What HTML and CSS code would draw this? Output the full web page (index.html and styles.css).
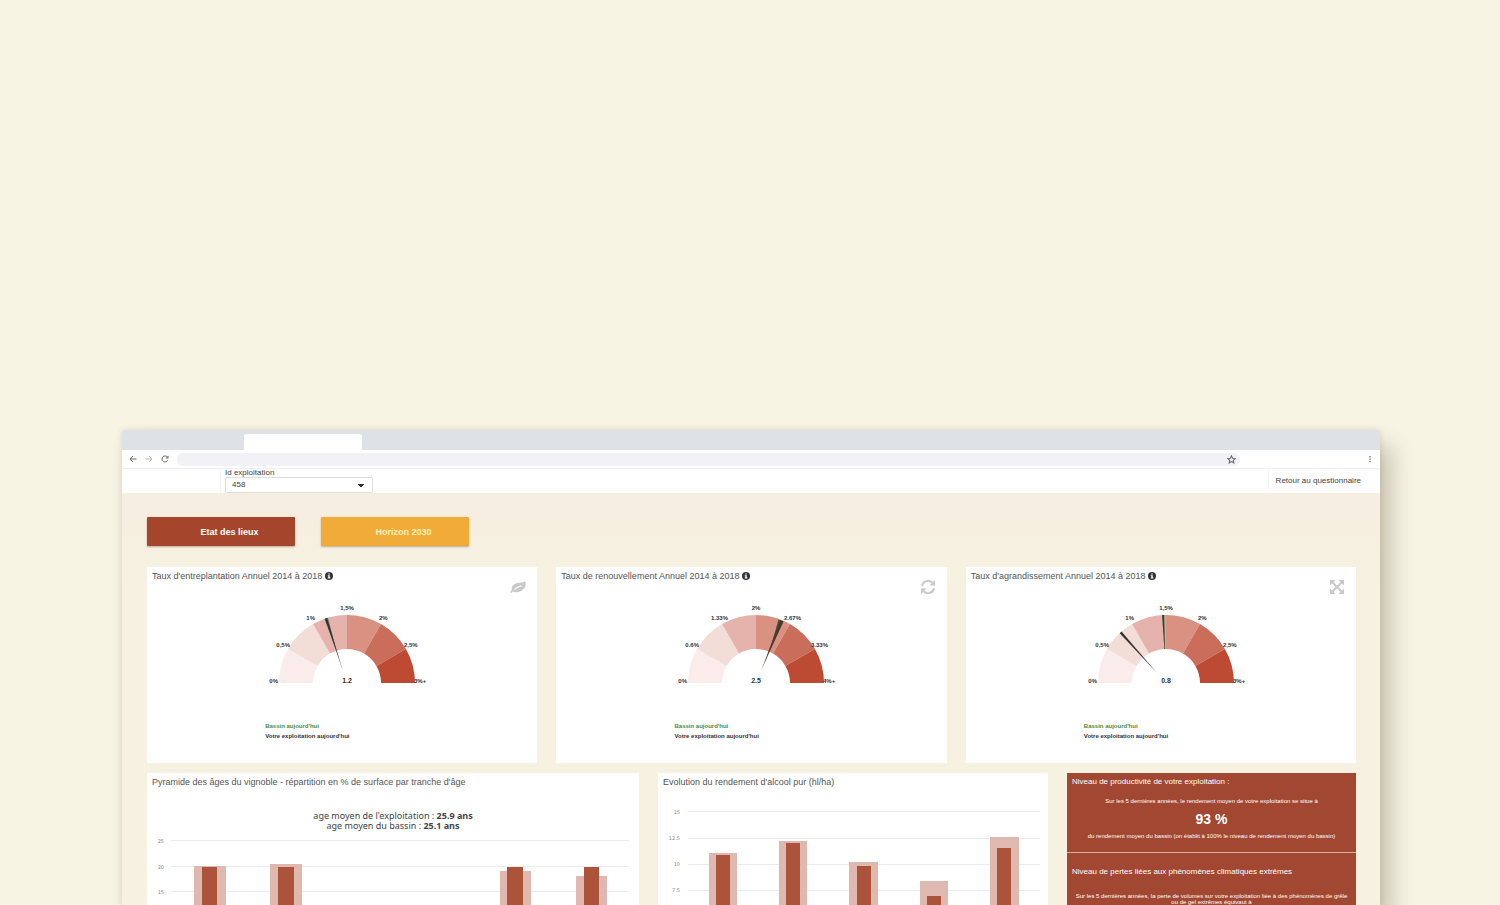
FILE: index.html
```html
<!DOCTYPE html>
<html lang="fr">
<head>
<meta charset="utf-8">
<title>Tableau de bord viticole</title>
<link rel="stylesheet" href="styles.css">
</head>
<body>
<svg class="defs" aria-hidden="true">
  <symbol id="info" viewBox="0 0 16 16"><circle cx="8" cy="8" r="8" fill="#333"/><path d="M6.500 3h3v2.200h-3zM5.500 6.500h4v4.500h1.200v2h-5.200v-2h1.200v-2.500h-1.200z" fill="#fff"/></symbol>
  <symbol id="arcs" viewBox="-82 -80 164 90">
    <path fill="#f9ecea" d="M-68 0A68 68 0 0 1 -58.900 -34L-29.400 -17A34 34 0 0 0 -34 0z"/>
    <path fill="#f2ddd7" d="M-58.900 -34A68 68 0 0 1 -34 -58.900L-17 -29.400A34 34 0 0 0 -29.400 -17z"/>
    <path fill="#e6b3ac" d="M-34 -58.900A68 68 0 0 1 0 -68L0 -34A34 34 0 0 0 -17 -29.400z"/>
    <path fill="#d99282" d="M0 -68A68 68 0 0 1 34 -58.900L17 -29.400A34 34 0 0 0 0 -34z"/>
    <path fill="#cb6d5b" d="M34 -58.900A68 68 0 0 1 58.900 -34L29.400 -17A34 34 0 0 0 17 -29.400z"/>
    <path fill="#bd4b33" d="M58.900 -34A68 68 0 0 1 68 0L34 0A34 34 0 0 0 29.400 -17z"/>
  </symbol>
</svg>
<div class="window">
  <div class="tabs"><div class="tab"></div></div>
  <div class="toolbar">
    <svg class="nav-icon" viewBox="0 0 8 8"><path d="M7.500 4H1M4 1L1 4l3 3" fill="none" stroke="#666" stroke-width="1"/></svg>
    <svg class="nav-icon" viewBox="0 0 8 8"><path d="M.5 4H7M4 1l3 3-3 3" fill="none" stroke="#bbb" stroke-width="1"/></svg>
    <svg class="nav-icon" viewBox="0 0 8 8"><path d="M6.700 5.300A3 3 0 1 1 6.300 2" fill="none" stroke="#666" stroke-width="1"/><path d="M7.500.5v3h-3z" fill="#666"/></svg>
    <div class="address">
      <svg class="star" viewBox="0 0 16 16"><path d="M8 1.500l1.900 4.400 4.800.4-3.600 3.200 1.100 4.700L8 11.700l-4.200 2.500 1.100-4.700L1.300 6.300l4.800-.4z" fill="none" stroke="#666" stroke-width="1.800"/></svg>
    </div>
    <svg class="dots" viewBox="0 0 4 8"><path d="M1.300 1h1.400v1.400H1.300zM1.300 3.400h1.400v1.400H1.300zM1.300 5.800h1.400v1.400H1.300z" fill="#777"/></svg>
  </div>
  <header class="header">
    <div class="field">
      <label for="farm">Id exploitation</label>
      <select id="farm"><option>458</option></select>
    </div>
    <a class="back" href="#">Retour au questionnaire</a>
  </header>
  <main class="content">
    <div class="actions">
      <button class="btn">Etat des lieux</button>
      <button class="btn btn-gold">Horizon 2030</button>
    </div>
    <div class="row gauges">
      <section class="card">
        <h2>Taux d'entreplantation Annuel 2014 à 2018 <svg class="info"><use href="#info"/></svg></h2>
        <svg class="corner" viewBox="0 0 16 16"><path d="M15.300 2C14 3.500 12 3.500 9.500 3.700 5 4 2 6 1.700 9.300c0 .8.1 1.300.3 1.800-.8.8-1.700 1.600-1.800 2.200 0 .6.700 1 1.200.7.600-.3 1-1 1.600-1.500 1.400.8 3.300 1 5.300.5C13.500 11.800 17 7.500 15.300 2zM4 10.600c2-2.400 4-3.700 7.500-4l.2.800C8.500 7.900 6.800 8.900 4.700 11.100z" fill="#c9c9c9"/></svg>
        <div class="gauge">
          <svg class="dial" viewBox="-82 -80 164 90">
            <use href="#arcs" x="-82" y="-80" width="164" height="90"/>
            <path d="M-22.500 -64L-19 -65.200L-10.500 -32.300z" fill="#5d7750"/>
            <path d="M-22 -64.300L-20 -65L-4.300 -13z" fill="#333"/>
            <g class="ticks"><text x="-69" y="0" text-anchor="end">0%</text><text x="-57" y="-36" text-anchor="end">0,5%</text><text x="-32" y="-63" text-anchor="end">1%</text><text x="0" y="-73" text-anchor="middle">1,5%</text><text x="32" y="-63">2%</text><text x="57" y="-36">2,5%</text><text x="67" y="0">3%+</text></g>
            <text class="value" x="0" y="0">1.2</text>
          </svg>
          <p class="basin">Bassin aujourd'hui</p><p>Votre exploitation aujourd'hui</p>
        </div>
      </section>
      <section class="card">
        <h2>Taux de renouvellement Annuel 2014 à 2018 <svg class="info"><use href="#info"/></svg></h2>
        <svg class="corner" viewBox="0 0 16 16"><path d="M2 6.800A6 6 0 0 1 12.300 3.800M14 9.200A6 6 0 0 1 3.700 12.200" fill="none" stroke="#c9c9c9" stroke-width="2"/><path d="M15 1v5.500H9.500zM1 15V9.500h5.500z" fill="#c9c9c9"/></svg>
        <div class="gauge">
          <svg class="dial" viewBox="-82 -80 164 90">
            <use href="#arcs" x="-82" y="-80" width="164" height="90"/>
            <path d="M22.500 -63.500L27.500 -61.500L13.500 -31.500z" fill="#4a5138"/>
            <path d="M24 -62.800L27.200 -61.500L5.400 -13z" fill="#4a3a2c"/>
            <g class="ticks"><text x="-69" y="0" text-anchor="end">0%</text><text x="-57" y="-36" text-anchor="end">0.6%</text><text x="-28" y="-63" text-anchor="end">1.33%</text><text x="0" y="-73" text-anchor="middle">2%</text><text x="28" y="-63">2.67%</text><text x="55" y="-36">3.33%</text><text x="67" y="0">4%+</text></g>
            <text class="value" x="0" y="0">2.5</text>
          </svg>
          <p class="basin">Bassin aujourd'hui</p><p>Votre exploitation aujourd'hui</p>
        </div>
      </section>
      <section class="card">
        <h2>Taux d'agrandissement Annuel 2014 à 2018 <svg class="info"><use href="#info"/></svg></h2>
        <svg class="corner" viewBox="0 0 16 16"><path d="M3 3l10 10M13 3L3 13" stroke="#c9c9c9" stroke-width="2"/><path d="M1 1h5.500L1 6.500zM15 1v5.500L9.500 1zM1 15V9.500L6.500 15zM15 15H9.500L15 9.500z" fill="#c9c9c9"/></svg>
        <div class="gauge">
          <svg class="dial" viewBox="-82 -80 164 90">
            <use href="#arcs" x="-82" y="-80" width="164" height="90"/>
            <path d="M-1.800 -68H-.4L-.4 -34H-1z" fill="#a9b58c"/>
            <path d="M-4 -68H-1.800L-1 -34H-1.600z" fill="#3d4033"/>
            <path d="M-46.300 -49.800L-44.500 -51.400L-9 -10z" fill="#333"/>
            <g class="ticks"><text x="-69" y="0" text-anchor="end">0%</text><text x="-57" y="-36" text-anchor="end">0,5%</text><text x="-32" y="-63" text-anchor="end">1%</text><text x="0" y="-73" text-anchor="middle">1,5%</text><text x="32" y="-63">2%</text><text x="57" y="-36">2,5%</text><text x="67" y="0">3%+</text></g>
            <text class="value" x="0" y="0">0.8</text>
          </svg>
          <p class="basin">Bassin aujourd'hui</p><p>Votre exploitation aujourd'hui</p>
        </div>
      </section>
    </div>
    <div class="row charts">
      <section class="card">
        <h2>Pyramide des âges du vignoble - répartition en % de surface par tranche d'âge</h2>
        <p class="ages">age moyen de l'exploitation : <b>25.9 ans</b><br>age moyen du bassin : <b>25.1 ans</b></p>
        <svg class="chart" viewBox="0 0 492 73">
          <path class="grid" d="M24 7.500H482M24 33.500H482M24 58.500H482"/>
          <g class="axis"><text x="17" y="10">25</text><text x="17" y="36">20</text><text x="17" y="61">15</text></g>
          <path class="basin-bars" d="M47 33h32v40h-32zM123 31h32v42h-32zM353 38h31v35h-31zM429 43h31v30h-31z"/>
          <path class="farm-bars" d="M55 34h15v39h-15zM131 34h16v39h-16zM360 34h16v39h-16zM437 34h15v39h-15z"/>
        </svg>
      </section>
      <section class="card">
        <h2>Evolution du rendement d'alcool pur (hl/ha)</h2>
        <svg class="chart chart-yield" viewBox="0 0 390 101">
          <path class="grid" d="M30 6.500H382M30 33.500H382M30 59.500H382M30 85.500H382"/>
          <g class="axis"><text x="22" y="9">15</text><text x="22" y="35">12.5</text><text x="22" y="61">10</text><text x="22" y="87">7.5</text></g>
          <path class="basin-bars" d="M51 48h28v53h-28zM121 36h28v65h-28zM191 57h29v44h-29zM262 76h28v25h-28zM332 32h29v69h-29z"/>
          <path class="farm-bars" d="M58 50h14v51h-14zM128 38h14v63h-14zM199 61h14v40h-14zM269 91h14v10h-14zM339 43h14v58h-14z"/>
        </svg>
      </section>
      <aside class="levels">
        <section>
          <h2>Niveau de productivité de votre exploitation :</h2>
          <p>Sur les 5 dernières années, le rendement moyen de votre exploitation se situe à</p>
          <strong>93 %</strong>
          <p>du rendement moyen du bassin (on établit à 100% le niveau de rendement moyen du bassin)</p>
        </section>
        <section class="losses">
          <h2>Niveau de pertes liées aux phénomènes climatiques extrêmes</h2>
          <p>Sur les 5 dernières années, la perte de volumes sur votre exploitation liée à des phénomènes de grêle ou de gel extrêmes équivaut à</p>
        </section>
      </aside>
    </div>
  </main>
</div>
</body>
</html>
```
FILE: styles.css
```css
* { box-sizing: border-box; }
body {
  margin: 0;
  height: 100vh;
  overflow: hidden;
  padding: 430px 120px 0 122px;
  background: #f8f4e3;
  color: #444;
  font: 8px/10px "Liberation Sans", Arial, sans-serif;
}
h2, p { margin: 0; }
.defs { position: absolute; width: 0; height: 0; }
.window {
  background: #fff;
  border-radius: 2px 2px 0 0;
  box-shadow: 12px 16px 22px rgba(70, 60, 40, .26), 0 0 6px rgba(70, 60, 40, .14);
}
.tabs { height: 20px; padding: 4px 0 0 122px; background: #dee1e5; border-radius: 2px 2px 0 0; }
.tab { width: 118px; height: 16px; background: #fff; border-radius: 3px 3px 0 0; }
.toolbar {
  display: flex;
  align-items: center;
  gap: 8px;
  height: 19px;
  padding: 0 8px 0 7px;
  border-bottom: 1px solid #efeff1;
}
.nav-icon { width: 8px; height: 8px; }
.address {
  flex: 1;
  display: flex;
  justify-content: flex-end;
  align-items: center;
  height: 13px;
  margin-right: 120px;
  padding-right: 4px;
  border-radius: 7px;
  background: #f1f1f6;
}
.star { width: 9px; height: 9px; }
.dots { width: 4px; height: 8px; }
.header { display: flex; justify-content: space-between; height: 24px; padding: 0 12px 0 98px; }
.field { display: flex; flex-direction: column; padding-left: 4px; border-left: 1px solid #f6f6f6; }
.field label { line-height: 8px; }
select {
  appearance: none;
  width: 148px;
  height: 16px;
  padding: 0 6px;
  border: 1px solid #ddd;
  border-radius: 2px;
  color: #444;
  font: inherit;
  background:
    linear-gradient(to bottom left, #333 50%, transparent 51%) right 11px center / 3px 3px no-repeat,
    linear-gradient(to bottom right, #333 50%, transparent 51%) right 8px center / 3px 3px no-repeat,
    #fff;
}
.back {
  margin-bottom: 4px;
  padding: 7px 7px 0 7px;
  border-left: 1px solid #f2f2f2;
  color: #444;
  text-decoration: none;
}
.content { padding: 24px 24px 0 25px; background: linear-gradient(#f6eee1, #f6f1e0 90px); }
.actions { display: flex; gap: 26px; margin-bottom: 21px; }
.btn {
  width: 148px;
  height: 29px;
  padding: 0 0 0 17px;
  border: 0;
  border-radius: 1px;
  background: #a4452c;
  color: #fff;
  font: bold 9px/10px "Liberation Sans", Arial, sans-serif;
  box-shadow: 0 1px 2px rgba(80, 40, 20, .35);
}
.btn-gold { background: #f1ab39; color: #fdf1b8; }
.row { display: grid; gap: 19px; margin-bottom: 10px; }
.gauges { grid-template-columns: repeat(3, 1fr); }
.charts { grid-template-columns: 492fr 390fr 289fr; }
.card { position: relative; background: #fff; padding-top: 4px; }
.gauges .card { height: 196px; }
.card h2 { padding-left: 5px; font-size: 9px; font-weight: normal; line-height: 11px; color: #555; }
.info { width: 8px; height: 8px; vertical-align: -1px; }
.corner { position: absolute; top: 12px; right: 11px; width: 16px; height: 16px; }
.gauge {
  width: 164px;
  margin: 21px auto 0;
  translate: 5px;
  color: #333;
  font-size: 6px;
  font-weight: bold;
}
.dial { display: block; width: 164px; height: 90px; margin-bottom: 28px; overflow: visible; }
.ticks { font-size: 6px; fill: #333; }
.value { font-size: 7px; text-anchor: middle; fill: #333; }
.basin { color: #4b8b42; }
.ages {
  padding: 23px 0 2px;
  text-align: center;
  color: #444;
  font: 9px/10px "Noto Sans", "DejaVu Sans", sans-serif;
}
.chart { display: block; width: 100%; }
.chart-yield { margin-top: 17px; }
.grid { stroke: #ececec; stroke-width: 1; }
.axis { font-family: "DejaVu Sans", sans-serif; font-size: 5px; text-anchor: end; fill: #888; }
.basin-bars { fill: #dfb9b0; }
.farm-bars { fill: #ab533b; }
.levels { background: #a24731; color: #fff; text-align: center; font-size: 6px; line-height: 6px; }
.levels section { padding: 4px 5px 0; }
.levels section:first-child { height: 80px; border-bottom: 1px solid #d9aea3; }
.levels h2 { margin-bottom: 11px; text-align: left; font-size: 8px; font-weight: normal; line-height: 10px; }
.levels strong { display: block; margin: 8px 0 7px; font-size: 14px; line-height: 14px; }
.levels .losses { padding-top: 14px; }
.levels .losses h2 { margin-bottom: 16px; }
```
